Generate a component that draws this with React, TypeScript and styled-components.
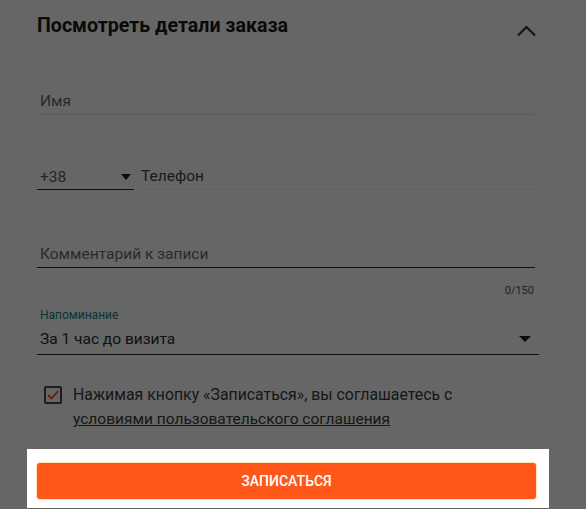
import React from "react";
import styled, { createGlobalStyle } from "styled-components";

const Global = createGlobalStyle`
  html, body { margin: 0; padding: 0; background: #ffffff; }
  body { font-family: Roboto, "Liberation Sans", Arial, sans-serif; color: #212121; }
  * { box-sizing: border-box; }
`;

const Page = styled.div`
  width: 586px;
  min-height: 509px;
  padding: 14px 51px 2px 37px;
`;

const Header = styled.div`
  display: flex;
  align-items: center;
  justify-content: space-between;
  height: 24px;
`;

const Title = styled.h2`
  margin: 0;
  font-size: 19.6px;
  line-height: 24px;
  font-weight: 700;
  color: #1a1a1a;
`;

const Chevron = styled.svg`
  width: 21px;
  height: 13px;
  margin-right: -2px;
  margin-top: 8px;
`;

const Field = styled.div<{ $top: number; $line: string; $pad?: number }>`
  margin-top: ${(p) => p.$top}px;
  padding: 0 0 ${(p) => p.$pad ?? 3}px 3px;
  border-bottom: 1px solid ${(p) => p.$line};
  font-size: 15.5px;
  line-height: 20px;
  color: #6b6b6b;
`;

const PhoneRow = styled.div`
  display: flex;
  align-items: flex-end;
  margin-top: 51px;
`;

const CodeSelect = styled.div`
  width: 97px;
  display: flex;
  align-items: center;
  justify-content: space-between;
  padding: 0 3px 2px 3px;
  border-bottom: 1px solid #2a2a2a;
  font-size: 15.5px;
  line-height: 20px;
  color: #5a5a5a;
`;

const Triangle = styled.span<{ $w: number }>`
  width: 0;
  height: 0;
  border-left: ${(p) => p.$w / 2}px solid transparent;
  border-right: ${(p) => p.$w / 2}px solid transparent;
  border-top: 6px solid #1e1e1e;
`;

const PhoneInput = styled.div`
  flex: 1;
  margin-left: 6px;
  padding: 0 0 3px 1px;
  border-bottom: 1px solid #eeeeee;
  font-size: 15.5px;
  line-height: 20px;
  color: #444;
`;

const Counter = styled.div`
  margin-top: 16px;
  padding-right: 1px;
  text-align: right;
  font-size: 11px;
  line-height: 14px;
  color: #555;
`;

const Reminder = styled.div`
  margin-top: 10px;
  margin-right: -4px;
`;

const ReminderLabel = styled.div`
  padding-left: 3px;
  font-size: 12px;
  line-height: 14px;
  color: #0f8a78;
`;

const ReminderSelect = styled.div`
  margin-top: 7px;
  display: flex;
  align-items: center;
  justify-content: space-between;
  padding: 0 8px 5px 3px;
  border-bottom: 1px solid #1c2a28;
  font-size: 15.5px;
  line-height: 20px;
  color: #2a2a2a;
`;

const Agreement = styled.div`
  display: flex;
  align-items: flex-start;
  margin-top: 28px;
`;

const CheckBox = styled.span`
  flex: none;
  width: 18px;
  height: 18px;
  margin: 3px 0 0 7px;
  border: 2px solid #4a4a4a;
  border-radius: 2px;
  display: flex;
  align-items: center;
  justify-content: center;
`;

const AgreeText = styled.p`
  margin: 0 0 0 11px;
  max-width: 400px;
  font-size: 15.85px;
  line-height: 24px;
  color: #3a3a3a;
`;

const AgreeLink = styled.a`
  color: #3a3a3a;
  text-decoration: underline;
  font-size: 15.5px;
`;

const Spotlight = styled.div`
  position: relative;
  z-index: 10;
  margin: 18px -14px 0 -10px;
  padding: 14px 13px 9px 10px;
  background: #ffffff;
  box-shadow: 0 0 0 3000px rgba(0, 0, 0, 0.6);
`;

const SubmitButton = styled.button`
  display: block;
  width: 100%;
  height: 36px;
  border: none;
  border-radius: 3px;
  background: #ff5719;
  box-shadow: 0 0 0 1px rgba(255, 214, 150, 0.7);
  color: #ffffff;
  font-family: Roboto, "Liberation Sans", Arial, sans-serif;
  font-size: 14px;
  font-weight: 500;
  text-transform: uppercase;
  cursor: pointer;
`;

export default function App() {
  return (
    <>
      <Global />
      <Page>
        <Header>
          <Title>Посмотреть детали заказа</Title>
          <Chevron viewBox="0 0 21 13" fill="none">
            <path d="M2 11.5 L10.5 3 L19 11.5" stroke="#333" strokeWidth="2.2" />
          </Chevron>
        </Header>

        <Field $top={53} $line="#e6e6e6">Имя</Field>

        <PhoneRow>
          <CodeSelect>
            <span>+38</span>
            <Triangle $w={11} />
          </CodeSelect>
          <PhoneInput>Телефон</PhoneInput>
        </PhoneRow>

        <Field $top={54} $line="#2a2a2a">Комментарий к записи</Field>
        <Counter>0/150</Counter>

        <Reminder>
          <ReminderLabel>Напоминание</ReminderLabel>
          <ReminderSelect>
            <span>За 1 час до визита</span>
            <Triangle $w={12} />
          </ReminderSelect>
        </Reminder>

        <Agreement>
          <CheckBox>
            <svg width="12" height="10" viewBox="0 0 12 10" fill="none">
              <path d="M1 5 L4.5 8.5 L11 1.2" stroke="#e8501e" strokeWidth="1.8" />
            </svg>
          </CheckBox>
          <AgreeText>
            Нажимая кнопку «Записаться», вы соглашаетесь с{" "}
            <AgreeLink>условиями пользовательского соглашения</AgreeLink>
          </AgreeText>
        </Agreement>

        <Spotlight>
          <SubmitButton>Записаться</SubmitButton>
        </Spotlight>
      </Page>
    </>
  );
}
